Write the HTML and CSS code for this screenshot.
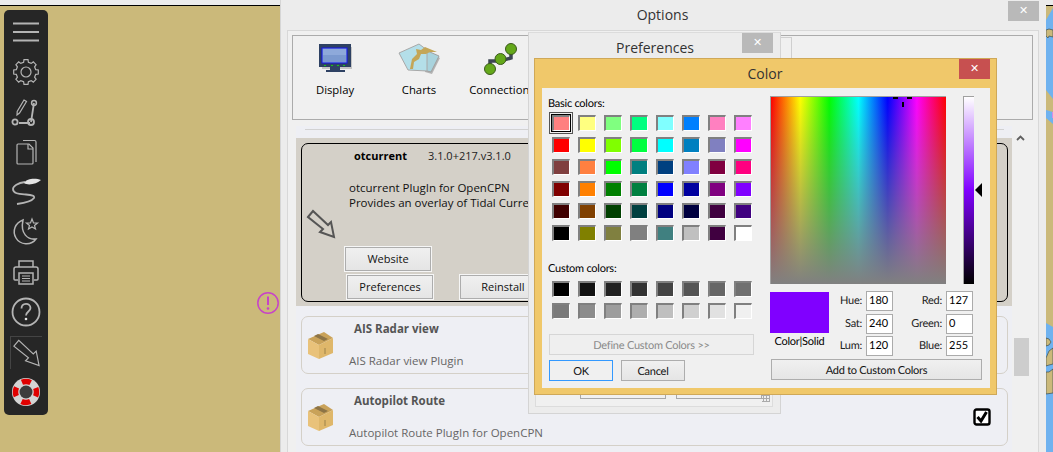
FILE: index.html
```html
<!DOCTYPE html>
<html lang="en">
<head>
<meta charset="utf-8">
<title>Options</title>
<link rel="stylesheet" href="styles.css">
</head>
<body>
<div class="desktop">
  <div class="topstrip"></div>
  <svg class="chartstrip" viewBox="0 0 7 452" width="7" height="452">
    <path class="water" d="M0 20 7 8V99L0 90ZM0 110 7 112V124L0 118ZM0 323 7 327V452H0Z"/>
    <path class="land" d="M0 30 3 29 7 30V37L3 36 2 38 0 36ZM0 338 3 339 5 342 3 345 0 346ZM0 358 3 351 7 348V364L3 365 0 366ZM0 372 3 372 7 369V393L0 394Z"/>
    <path class="pink" d="M6 112h1v6h-1z"/>
  </svg>

  <nav class="toolbar-side">
    <div class="side-item"><svg viewBox="0 0 32 32"><path class="ic" d="M3 7.5H29M3 16H29M3 24.500H29" stroke-width="2"/></svg></div>
    <div class="side-item"><svg viewBox="0 0 32 32"><path class="ic thin" d="M25.700 13.600 28.300 14V18L25.700 18.400 24.600 21.200 26.100 23.300 23.300 26.100 21.200 24.600 18.400 25.700 18 28.300H14L13.600 25.700 10.800 24.600 8.700 26.100 5.900 23.300 7.400 21.200 6.300 18.400 3.700 18V14L6.300 13.600 7.400 10.800 5.900 8.700 8.700 5.900 10.800 7.400 13.600 6.300 14 3.700H18L18.400 6.300 21.200 7.400 23.300 5.900 26.100 8.700 24.600 10.800Z"/><circle class="ic thin" cx="16" cy="16" r="5"/></svg></div>
    <div class="side-item"><svg viewBox="0 0 32 32"><path class="ic" d="M24 7 21 26M20 27H9" stroke-width="1.800"/><circle class="ic" cx="24" cy="7" r="2.400" stroke-width="1.500"/><circle class="ic" cx="21" cy="26" r="3" stroke-width="1.800"/><circle class="ic" cx="5" cy="26" r="2.600" stroke-width="1.800"/><path class="ic thin" d="M14 4 16.500 5.500 9.500 17 7 19 7.200 15.500Z"/></svg></div>
    <div class="side-item"><svg viewBox="0 0 32 32"><path class="ic thin" d="M13 4.500H24.500Q26 4.500 26 6V26"/><path class="ic thin" d="M7 9Q7 8 8 8H19L23 12V27Q23 28 22 28H8Q7 28 7 27Z"/><path class="ic thin" d="M18 8V13H23"/></svg></div>
    <div class="side-item"><svg viewBox="0 0 32 32"><path class="ic" d="M15 6C8 7 3 10 3 13 3 18 10 18 16 18.500 22 19 25 20 24 22 22 25 14 27 7 28" stroke-width="1.800"/><path class="fillic" d="M14 7C17 2 26 2 31 4 27 8 18 10 14 7Z"/></svg></div>
    <div class="side-item"><svg viewBox="0 0 32 32"><path class="ic" d="M13 4C5 7 2 15 6 22 10 29 21 30 26 23 18 24 10 18 13 4Z" stroke-width="1.500"/><path class="ic thin" d="M22 3 23.500 7H27.500L24.500 9.500 25.500 13 22 11 18.500 13 19.500 9.500 16.500 7H20.500Z"/></svg></div>
    <div class="side-item"><svg viewBox="0 0 32 32"><path class="ic" d="M9 11V5H23V11M8 24H5Q4 24 4 23V13Q4 11 6 11H26Q28 11 28 13V23Q28 24 27 24H24" stroke-width="1.500"/><rect class="ic" x="9" y="17" width="14" height="11" stroke-width="1.500"/><path class="ic thin" d="M12 20H20M12 22.500H20M12 25H20"/></svg></div>
    <div class="side-item"><svg viewBox="0 0 32 32"><circle class="ic" cx="16" cy="16" r="13.500" stroke-width="1.800"/><path class="ic" d="M11.500 12.500C11.500 6.500 20.500 6.500 20.500 12C20.500 15.500 16 15.500 16 19.500" stroke-width="1.800"/><circle class="fillic" cx="16" cy="23" r="1.300"/></svg></div>
    <div class="side-item framed"><svg viewBox="0 0 32 32"><path class="ic thin" d="M3 9 8 3 23 17 26 14 29 29 15 24 18 21Z"/></svg></div>
    <div class="side-item"><svg viewBox="0 0 32 32"><circle cx="16" cy="16" r="14" fill="#d4d4d4"/><circle cx="16" cy="16" r="10.500" fill="none" stroke="#e00000" stroke-width="5.500" stroke-dasharray="9 7.500" stroke-dashoffset="4.500"/><circle cx="16" cy="16" r="6.500" fill="#3c3c3c"/></svg></div>
  </nav>

  <svg class="alert" viewBox="0 0 24 24" width="24" height="24"><circle cx="12" cy="12" r="10.200" fill="none" stroke="#c744c7" stroke-width="1.500"/><path d="M12 5.500V14" stroke="#c744c7" stroke-width="2" fill="none"/><circle cx="12" cy="17.500" r="1.300" fill="#c744c7"/></svg>

  <section class="win options">
    <header class="titlebar options-title">Options</header>
    <button class="close close-grey">&#x2715;</button>
    <div class="options-body">
      <div class="cats">
        <div class="cat cat-display">
          <svg viewBox="0 0 36 34" width="36" height="34"><path d="M5 4H35V26H5Z" fill="#999" opacity=".5"/><path d="M2 1H34V24H23V27H28V29H9V27H13V24H2Z" fill="#2e4163"/><rect x="5" y="5" width="25" height="15" fill="#7b99cf" stroke="#1515ee"/><path d="M6 6H29V12H6Z" fill="#8ea9da"/><path d="M7 22h2v1H7zM14 22h2v1h-2zM20 22h2v1h-2zM26 22h2v1h-2z" fill="#18c418"/></svg>
          <span>Display</span>
        </div>
        <div class="cat cat-charts">
          <svg viewBox="0 0 44 34" width="44" height="34"><path d="M26 7 43 15 35 31 28 29Z" fill="#777" opacity=".5"/><path d="M26 6 42 13 34 29 26 27Z" fill="#a9d3dd" stroke="#a0a0a0"/><path d="M2 10 22 1 30 7V28L11 27Z" fill="#b4dfe9" stroke="#a8a8a8"/><path d="M13 26 15 16 20 11 19 6 24 7 28 4 40 9 33 9 29 11 24 11 22 16 17 19 16 26Z" fill="#c4a658"/></svg>
          <span>Charts</span>
        </div>
        <div class="cat cat-conn">
          <svg viewBox="0 0 36 34" width="36" height="34"><path d="M6 27V18H16L27 15V7" fill="none" stroke="#3d4652" stroke-width="3.500"/><circle cx="6" cy="26" r="5.500" fill="#64a81a" stroke="#3c5a1e"/><circle cx="16.500" cy="16" r="5.500" fill="#64a81a" stroke="#3c5a1e"/><circle cx="27" cy="6" r="5.500" fill="#64a81a" stroke="#3c5a1e"/></svg>
          <span>Connections</span>
        </div>
      </div>
      <div class="list-row">
        <div class="list">
          <div class="list-rule"></div>
          <div class="selected">
            <div class="card card-active">
              <div class="card-head"><b>otcurrent</b><span class="ver">3.1.0+217.v3.1.0</span></div>
              <div class="card-desc">otcurrent PlugIn for OpenCPN<br>Provides an overlay of Tidal Currents</div>
              <div class="card-main">
                <svg class="card-arrow" viewBox="0 0 32 32" width="32" height="32"><path d="M3 9 8 3 23 17 26 14 29 29 15 24 18 21Z" fill="none" stroke="#555" stroke-width="2"/></svg>
                <div class="card-actions">
                  <span class="btn btn-web">Website</span>
                  <div class="btn-row"><span class="btn btn-pref">Preferences</span><span class="btn btn-rein">Reinstall</span></div>
                </div>
              </div>
            </div>
          </div>
          <div class="card card-plain">
            <svg class="box" viewBox="0 0 27 29" width="27" height="29"><use href="#pkg"/></svg>
            <div class="plain-text"><b>AIS Radar view</b><span>AIS Radar view Plugin</span></div>
          </div>
          <div class="card card-plain card-last">
            <svg class="box" viewBox="0 0 27 29" width="27" height="29"><use href="#pkg"/></svg>
            <div class="plain-text"><b>Autopilot Route</b><span>Autopilot Route PlugIn for OpenCPN</span></div>
            <svg class="check" viewBox="0 0 18 18" width="18" height="18"><rect x="1.500" y="1.500" width="15" height="15" rx="2" fill="#fff" stroke="#000" stroke-width="2.400"/><path d="M4.500 9 8 13 13.500 4" fill="none" stroke="#000" stroke-width="3"/></svg>
          </div>
        </div>
        <div class="scrollbar">
          <svg viewBox="0 0 9 6" width="9" height="6"><path d="M1 5 4.500 1.500 8 5" fill="none" stroke="#606060" stroke-width="1.800"/></svg>
          <div class="thumb"></div>
        </div>
      </div>
    </div>
    <div class="behind"></div>
  </section>

  <section class="win prefs">
    <header class="titlebar prefs-title">Preferences</header>
    <button class="close close-grey">&#x2715;</button>
    <div class="prefs-inset">
      <div class="prefs-buttons"><span></span><span></span><i class="grip"></i></div>
    </div>
  </section>

  <section class="win color">
    <header class="titlebar color-title">Color</header>
    <button class="close close-red">&#x2715;</button>
    <div class="client">
      <div class="left">
        <div class="lbl">Basic colors:</div>
        <div class="swatches basic">
          <i class="sw picked c-ff8080"></i><i class="sw c-ffff80"></i><i class="sw c-80ff80"></i><i class="sw c-00ff80"></i><i class="sw c-80ffff"></i><i class="sw c-0080ff"></i><i class="sw c-ff80c0"></i><i class="sw c-ff80ff"></i>
          <i class="sw c-ff0000"></i><i class="sw c-ffff00"></i><i class="sw c-80ff00"></i><i class="sw c-00ff40"></i><i class="sw c-00ffff"></i><i class="sw c-0080c0"></i><i class="sw c-8080c0"></i><i class="sw c-ff00ff"></i>
          <i class="sw c-804040"></i><i class="sw c-ff8040"></i><i class="sw c-00ff00"></i><i class="sw c-008080"></i><i class="sw c-004080"></i><i class="sw c-8080ff"></i><i class="sw c-800040"></i><i class="sw c-ff0080"></i>
          <i class="sw c-800000"></i><i class="sw c-ff8000"></i><i class="sw c-008000"></i><i class="sw c-008040"></i><i class="sw c-0000ff"></i><i class="sw c-0000a0"></i><i class="sw c-800080"></i><i class="sw c-8000ff"></i>
          <i class="sw c-400000"></i><i class="sw c-804000"></i><i class="sw c-004000"></i><i class="sw c-004040"></i><i class="sw c-000080"></i><i class="sw c-000040"></i><i class="sw c-400040"></i><i class="sw c-400080"></i>
          <i class="sw c-000000"></i><i class="sw c-808000"></i><i class="sw c-808040"></i><i class="sw c-808080"></i><i class="sw c-408080"></i><i class="sw c-c0c0c0"></i><i class="sw c-400040"></i><i class="sw c-ffffff"></i>
        </div>
        <div class="lbl lbl-custom">Custom colors:</div>
        <div class="swatches custom">
          <i class="sw c-000000"></i><i class="sw g1"></i><i class="sw g2"></i><i class="sw g3"></i><i class="sw g4"></i><i class="sw g5"></i><i class="sw g6"></i><i class="sw g7"></i>
          <i class="sw g8"></i><i class="sw g9"></i><i class="sw g10"></i><i class="sw g11"></i><i class="sw g12"></i><i class="sw g13"></i><i class="sw g14"></i><i class="sw g15"></i>
        </div>
        <div class="dlgbtn define">Define Custom Colors &gt;&gt;</div>
        <div class="okrow"><div class="dlgbtn ok">OK</div><div class="dlgbtn cancel">Cancel</div></div>
      </div>
      <div class="right">
        <div class="picker">
          <div class="spectrum"><i class="cross c1"></i><i class="cross c2"></i><i class="cross c3"></i></div>
          <div class="lum"></div>
          <i class="lum-mark"></i>
        </div>
        <div class="values">
          <div class="solid-col"><div class="solid"></div><div class="solid-lbl">Color|Solid</div></div>
          <div class="fields">
            <span class="fl">Hue:</span><span class="fv">180</span><span class="fl">Red:</span><span class="fv">127</span>
            <span class="fl">Sat:</span><span class="fv">240</span><span class="fl">Green:</span><span class="fv">0</span>
            <span class="fl">Lum:</span><span class="fv">120</span><span class="fl">Blue:</span><span class="fv">255</span>
          </div>
        </div>
        <div class="dlgbtn add">Add to Custom Colors</div>
      </div>
    </div>
  </section>

  <svg class="defs" width="0" height="0">
    <defs>
      <g id="pkg">
        <path d="M1 8 17 1 26 7 12 14Z" fill="#c9a259"/>
        <path d="M1 8 12 14V28L1 23Z" fill="#e9c27a"/>
        <path d="M12 14 26 7V22L12 28Z" fill="#dfb76a"/>
        <path d="M7 5 17 10 21 8 11 3Z" fill="#8d7446"/>
        <path d="M18 17V23" stroke="#b39556" stroke-width="1.500"/>
      </g>
    </defs>
  </svg>
</div>
</body>
</html>
```
FILE: styles.css
```css
* { box-sizing: border-box; }
html, body { margin: 0; padding: 0; }
body { width: 1053px; height: 452px; overflow: hidden; font-family: "Open Sans", "Noto Sans", sans-serif; font-size: 11px; color: #000; }
.desktop { position: relative; width: 1053px; height: 452px; overflow: hidden; background: #cbb97a; }
.topstrip { height: 6px; background: #ececec; border-bottom: 1px solid #000; }
.chartstrip { position: absolute; left: 1046px; top: 0; }
.water { fill: #6fb2ef; }
.land { fill: #cbb97a; stroke: #3f4f50; stroke-width: .7; }
.pink { fill: #d58be6; }

.toolbar-side { position: absolute; left: 4px; top: 10px; width: 44px; height: 405px; padding-top: 2px; background: #262626; border-radius: 5px; display: flex; flex-direction: column; align-items: center; }
.side-item { width: 32px; height: 40px; display: flex; align-items: center; justify-content: center; flex: none; }
.side-item svg { width: 32px; height: 32px; display: block; }
.framed { border-top: 1px solid #444; border-left: 1px solid #444; height: 33px; margin: 4px 0 3px; }
.ic { fill: none; stroke: #b4b4b4; }
.thin { stroke-width: 1.200; }
.fillic { fill: #e4e4e4; }
.alert { position: absolute; left: 256px; top: 291px; }

.win { position: absolute; background: #ececec; }
.titlebar { font-size: 14px; color: #333; text-align: center; }
.close { position: absolute; top: 1px; width: 31px; height: 20px; padding: 0; border: 0; color: #fff; font-size: 11px; line-height: 20px; font-weight: 700; font-family: "DejaVu Sans", sans-serif; }
.close-grey { background: #b9b9b9; }
.close-red { background: #c75050; top: 0; right: 6px; }

.options { left: 280px; top: 0; width: 766px; height: 452px; border-left: 1px solid #d6d6d6; }
.options-title { height: 30px; line-height: 30px; padding-right: 2px; }
.options > .close { right: 7px; }
.options-body { margin-left: 6px; width: 752px; height: 422px; background: #f0f0f0; border: 1px solid #d8d8d8; border-bottom: 0; padding: 4px 4px 0; }
.cats { width: 741px; height: 85px; border: 1px solid #ababab; display: flex; background: #f0f0f0; }
.cat { display: flex; flex-direction: column; align-items: center; position: relative; font-size: 11.300px; }
.cat span { position: absolute; top: 46px; white-space: nowrap; }
.cat svg { margin-top: 7px; display: block; flex: none; }
.cat-display { width: 36px; margin-left: 24px; }
.cat-charts { width: 44px; margin-left: 44px; }
.cat-conn { width: 36px; margin-left: 43px; }
.list-row { display: flex; margin: 6px 0 0 4px; }
.list { width: 716px; height: 330px; background: #eeeff4; font-size: 11.500px; }
.list-rule { height: 1px; margin: 3px 8px 0 9px; background: #d2d2d2; }
.selected { margin-top: 8px; height: 168px; padding: 5px 4px 4px 5px; background: #d4d0c8; }
.card { width: 707px; border-radius: 7px; position: relative; }
.card-active { height: 159px; border: 1px solid #000; }
.card-head { padding: 4px 0 0 52px; line-height: 15px; }
.card-head b { display: inline-block; width: 74px; font-weight: 700; font-size: 11px; }
.ver { color: #222; font-size: 11px; }
.card-desc { margin: 17px 0 0 47px; line-height: 15px; white-space: nowrap; color: #111; }
.card-main { display: flex; margin-top: 2px; }
.card-arrow { margin: -4px 0 0 3px; flex: none; }
.card-actions { margin: 35px 0 0 8px; font-size: 11px; }
.btn { display: block; text-align: center; height: 24px; line-height: 21px; border: 1px solid #adadad; outline: 1px solid #f6f6f6; outline-offset: 0; background: linear-gradient(#f0f0f0, #e5e5e5); color: #111; }
.btn-web { width: 86px; }
.btn-row { display: flex; margin: 4px 0 0 2px; }
.btn-pref { width: 86px; }
.btn-rein { width: 86px; margin-left: 27px; }
.card-plain { height: 58px; margin: 10px 0 0 5px; border: 1px solid #d4d0c8; display: flex; }
.card-last { margin-top: 14px; }
.box { margin: 14px 0 0 5px; flex: none; }
.plain-text { display: flex; flex-direction: column; flex: 1; margin-left: 15px; color: #666; }
.plain-text b { margin: 4px 0 0 5px; line-height: 15px; color: #555; }
.plain-text span { margin-top: 17px; line-height: 15px; }
.check { margin: 19px 16px 0 0; flex: none; }
.scrollbar { width: 23px; display: flex; flex-direction: column; align-items: center; padding-top: 9px; }
.scrollbar svg { margin-right: 5px; flex: none; }
.thumb { margin-top: 197px; width: 15px; height: 38px; background: #cdcdcd; margin-right: 4px; }
.behind { position: absolute; left: 499px; top: 37px; width: 12px; height: 30px; border: 1px solid #cfcfcf; background: #f0f0f0; }

.prefs { left: 528px; top: 32px; width: 253px; height: 382px; border: 1px solid #d4d4d4; border-top-color: #dcdcdc; display: flex; flex-direction: column; }
.prefs-title { height: 30px; line-height: 29px; padding-left: 1px; }
.prefs > .close { right: 7px; top: 0; }
.prefs-inset { margin: auto 7px 6px 6px; height: 30px; border: 1px solid #dcdcdc; border-top: 0; background: #f0f0f0; }
.prefs-buttons { display: flex; padding: 0 0 0 44px; gap: 10px; height: 22px; position: relative; }
.prefs-buttons span { width: 86px; border: 1px solid #a8a8a8; }
.grip { position: absolute; left: 226px; bottom: -3px; width: 8px; height: 8px; background: radial-gradient(circle, #aaa 1px, transparent 1.200px) 0 0 / 3px 3px; }

.color { left: 534px; top: 58px; width: 463px; height: 337px; background: #f0c86a; border: 1px solid #cfa858; }
.color-title { height: 29px; line-height: 30px; padding-right: 1px; }
.client { margin: 0 6px 0 7px; width: 448px; height: 300px; background: #f0f0f0; display: flex; font-family: Lato, "Open Sans", sans-serif; font-size: 11px; letter-spacing: -.25px; text-rendering: geometricPrecision; }
.left { width: 206px; margin-left: 6px; flex: none; }
.lbl { margin-top: 8px; line-height: 15px; height: 15px; }
.lbl-custom { margin-top: 20px; }
.swatches { display: grid; grid-template-columns: repeat(8, 18px); grid-auto-rows: 16px; column-gap: 8px; row-gap: 6px; margin: 4px 0 0 4px; }
.custom { margin-top: 5px; }
.sw { display: block; border-style: solid; border-width: 2px 1px 1px 2px; border-color: #808080 #fff #fff #808080; }
.picked { outline: 1px solid #000; outline-offset: 0; box-shadow: 0 0 0 2px #f0f0f0, 0 0 0 3px #555; }
.c-ff8080 { background: #ff8080; } .c-ffff80 { background: #ffff80; } .c-80ff80 { background: #80ff80; } .c-00ff80 { background: #00ff80; } .c-80ffff { background: #80ffff; } .c-0080ff { background: #0080ff; } .c-ff80c0 { background: #ff80c0; } .c-ff80ff { background: #ff80ff; }
.c-ff0000 { background: #ff0000; } .c-ffff00 { background: #ffff00; } .c-80ff00 { background: #80ff00; } .c-00ff40 { background: #00ff40; } .c-00ffff { background: #00ffff; } .c-0080c0 { background: #0080c0; } .c-8080c0 { background: #8080c0; } .c-ff00ff { background: #ff00ff; }
.c-804040 { background: #804040; } .c-ff8040 { background: #ff8040; } .c-00ff00 { background: #00ff00; } .c-008080 { background: #008080; } .c-004080 { background: #004080; } .c-8080ff { background: #8080ff; } .c-800040 { background: #800040; } .c-ff0080 { background: #ff0080; }
.c-800000 { background: #800000; } .c-ff8000 { background: #ff8000; } .c-008000 { background: #008000; } .c-008040 { background: #008040; } .c-0000ff { background: #0000ff; } .c-0000a0 { background: #0000a0; } .c-800080 { background: #800080; } .c-8000ff { background: #8000ff; }
.c-400000 { background: #400000; } .c-804000 { background: #804000; } .c-004000 { background: #004000; } .c-004040 { background: #004040; } .c-000080 { background: #000080; } .c-000040 { background: #000040; } .c-400040 { background: #400040; } .c-400080 { background: #400080; }
.c-000000 { background: #000; } .c-808000 { background: #808000; } .c-808040 { background: #808040; } .c-808080 { background: #808080; } .c-408080 { background: #408080; } .c-c0c0c0 { background: #c0c0c0; } .c-ffffff { background: #fff; }
.g1 { background: #121212; } .g2 { background: #222; } .g3 { background: #333; } .g4 { background: #444; } .g5 { background: #555; } .g6 { background: #666; } .g7 { background: #707070; }
.g8 { background: #7b7b7b; } .g9 { background: #8c8c8c; } .g10 { background: #9d9d9d; } .g11 { background: #aeaeae; } .g12 { background: #bfbfbf; } .g13 { background: #d0d0d0; } .g14 { background: #e1e1e1; } .g15 { background: #f0f0f0; }
.dlgbtn { height: 21px; line-height: 21px; text-align: center; border: 1px solid #adadad; background: linear-gradient(#f0f0f0, #e5e5e5); color: #111; }
.define { width: 205px; margin: 15px 0 0 1px; border-color: #d6d6d6; background: #efefef; color: #8a8a8a; }
.okrow { display: flex; gap: 8px; margin: 5px 0 0 1px; }
.ok, .cancel { width: 64px; }
.ok { border-color: #3399ff; background: #f0f0f0; }
.right { width: 212px; margin-left: 16px; flex: none; }
.picker { position: relative; display: flex; margin-top: 8px; height: 188px; }
.spectrum { position: relative; width: 176px; height: 188px; border-style: solid; border-width: 1px 0 0 1px; border-color: #a0a0a0; background: linear-gradient(to bottom, transparent, #808080), linear-gradient(to right, #f00, #ff0 16.670%, #0f0 33.330%, #0ff 50%, #00f 66.670%, #f0f 83.330%, #f00); }
.cross { position: absolute; background: #000; }
.c1 { left: 122px; top: 0; width: 5px; height: 2px; }
.c2 { left: 136px; top: 0; width: 5px; height: 2px; }
.c3 { left: 131px; top: 5px; width: 2px; height: 5px; }
.lum { width: 11px; height: 188px; margin-left: 17px; border-style: solid; border-width: 1px 0 0 1px; border-color: #a0a0a0; background: linear-gradient(to bottom, #fff, #8000ff 50%, #000); }
.lum-mark { position: absolute; left: 205px; top: 87px; width: 0; height: 0; border-style: solid; border-width: 7px 7px 7px 0; border-color: transparent #000 transparent transparent; }
.values { display: flex; margin-top: 7px; }
.solid-col { width: 59px; flex: none; }
.solid { width: 59px; height: 41px; margin-top: 1px; background: #8000ff; }
.solid-lbl { margin-top: 1px; line-height: 15px; text-align: center; white-space: nowrap; }
.fields { display: grid; grid-template-columns: 33px 27px 45px 27px; grid-auto-rows: 20px; column-gap: 4px; row-gap: 2.500px; }
.fl { text-align: right; line-height: 20px; color: #222; }
.fv { background: #fff; border: 1px solid #ababab; line-height: 18px; padding-left: 2px; font-size: 11px; letter-spacing: 0; }
.add { width: 211px; margin: 3px 0 0 1px; }
.defs { position: absolute; }
```
